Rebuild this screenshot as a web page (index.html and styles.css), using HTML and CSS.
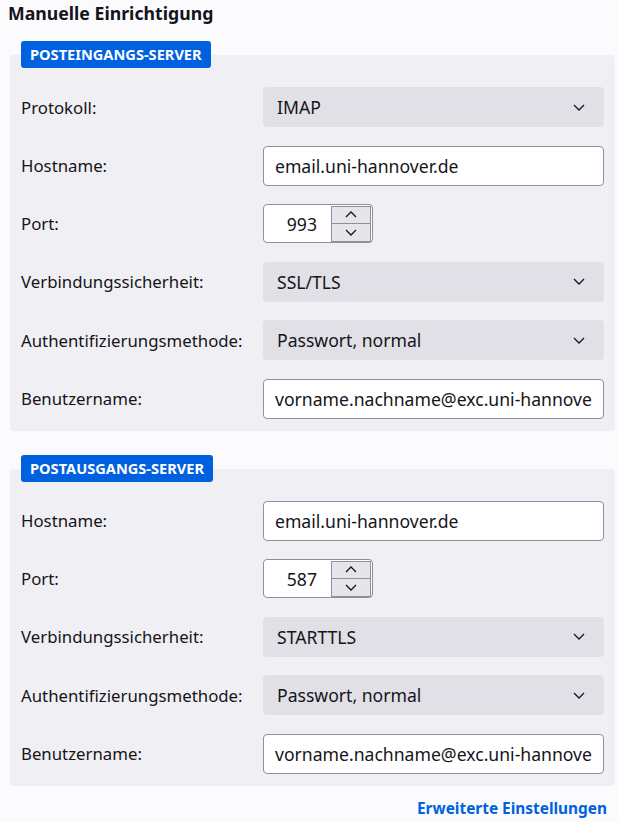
FILE: index.html
```html
<!DOCTYPE html>
<html lang="de">
<head>
    <meta charset="UTF-8">
    <title>Manuelle Einrichtigung</title>
    <link rel="stylesheet" href="styles.css">
</head>
<body>
    <div class="page">
        <h1>Manuelle Einrichtigung</h1>

        <section class="server">
            <div class="badge">Posteingangs-Server</div>
            <div class="panel">
                <div class="row">
                    <label>Protokoll:</label>
                    <div class="select"><span>IMAP</span><svg class="chev" viewBox="0 0 12 7"><path d="M1 1l5 5 5-5"/></svg></div>
                </div>
                <div class="row">
                    <label>Hostname:</label>
                    <div class="input"><span>email.uni-hannover.de</span></div>
                </div>
                <div class="row">
                    <label>Port:</label>
                    <div class="port">
                        <span class="port-value">993</span>
                        <div class="spin">
                            <div class="spin-btn"><svg viewBox="0 0 12 7"><path d="M1 6l5-5 5 5"/></svg></div>
                            <div class="spin-btn"><svg viewBox="0 0 12 7"><path d="M1 1l5 5 5-5"/></svg></div>
                        </div>
                    </div>
                </div>
                <div class="row">
                    <label>Verbindungssicherheit:</label>
                    <div class="select"><span>SSL/TLS</span><svg class="chev" viewBox="0 0 12 7"><path d="M1 1l5 5 5-5"/></svg></div>
                </div>
                <div class="row">
                    <label>Authentifizierungsmethode:</label>
                    <div class="select"><span>Passwort, normal</span><svg class="chev" viewBox="0 0 12 7"><path d="M1 1l5 5 5-5"/></svg></div>
                </div>
                <div class="row">
                    <label>Benutzername:</label>
                    <div class="input"><span>vorname.nachname@exc.uni-hannover.de</span></div>
                </div>
            </div>
        </section>

        <section class="server">
            <div class="badge">Postausgangs-Server</div>
            <div class="panel">
                <div class="row">
                    <label>Hostname:</label>
                    <div class="input"><span>email.uni-hannover.de</span></div>
                </div>
                <div class="row">
                    <label>Port:</label>
                    <div class="port">
                        <span class="port-value">587</span>
                        <div class="spin">
                            <div class="spin-btn"><svg viewBox="0 0 12 7"><path d="M1 6l5-5 5 5"/></svg></div>
                            <div class="spin-btn"><svg viewBox="0 0 12 7"><path d="M1 1l5 5 5-5"/></svg></div>
                        </div>
                    </div>
                </div>
                <div class="row">
                    <label>Verbindungssicherheit:</label>
                    <div class="select"><span>STARTTLS</span><svg class="chev" viewBox="0 0 12 7"><path d="M1 1l5 5 5-5"/></svg></div>
                </div>
                <div class="row">
                    <label>Authentifizierungsmethode:</label>
                    <div class="select"><span>Passwort, normal</span><svg class="chev" viewBox="0 0 12 7"><path d="M1 1l5 5 5-5"/></svg></div>
                </div>
                <div class="row">
                    <label>Benutzername:</label>
                    <div class="input"><span>vorname.nachname@exc.uni-hannover.de</span></div>
                </div>
            </div>
        </section>

        <div class="footer">
            <a href="#">Erweiterte Einstellungen</a>
        </div>
    </div>
</body>
</html>
```

FILE: styles.css
```css
body {
    margin: 0;
    background: #fbfbfe;
    font-family: "Noto Sans", sans-serif;
    color: #15141a;
}
.page {
    width: 619px;
}
h1 {
    margin: 0;
    padding: 0 8px;
    font-size: 17.7px;
    font-weight: bold;
    line-height: 26px;
}
.server {
    margin: 15px 4px 0 10px;
}
.server + .server {
    margin-top: 24px;
}
.badge {
    position: relative;
    z-index: 1;
    width: fit-content;
    margin-left: 11px;
    margin-bottom: -13px;
    padding: 0 9px;
    height: 27px;
    line-height: 27px;
    background: #0061e0;
    color: #fff;
    border-radius: 3px;
    font-size: 14.6px;
    font-weight: bold;
    text-transform: uppercase;
}
.panel {
    background: #f0f0f4;
    border-radius: 4px;
    padding: 32px 11px 12px;
    display: flex;
    flex-direction: column;
    gap: 18.5px;
}
.row {
    display: grid;
    grid-template-columns: 242px minmax(0, 1fr);
    align-items: center;
    font-size: 16.8px;
}
.select, .input, .port {
    font-size: 17.6px;
}
.select {
    height: 40px;
    background: #e0e0e6;
    border-radius: 4px;
    display: flex;
    align-items: center;
    justify-content: space-between;
    padding: 0 19px 0 14px;
}
.chev {
    width: 12px;
    height: 7px;
    fill: none;
    stroke: #15141a;
    stroke-width: 1.3;
}
.input {
    min-width: 0;
    height: 38px;
    line-height: 38px;
    background: #fff;
    border: 1px solid #8f8f9d;
    border-radius: 4px;
    padding: 0 11px;
}
.input span {
    display: block;
    white-space: nowrap;
    overflow: hidden;
}
.port {
    width: 108px;
    height: 37px;
    background: #fff;
    border: 1px solid #8f8f9d;
    border-radius: 4px;
    display: flex;
    align-items: center;
    justify-content: flex-end;
}
.port-value {
    padding-right: 14px;
}
.spin {
    width: 38px;
    height: 34px;
    border: 1px solid #8f8f9d;
    margin-right: 1px;
    display: flex;
    flex-direction: column;
}
.spin-btn {
    flex: 1;
    background: #e5e5ea;
    display: flex;
    align-items: center;
    justify-content: center;
}
.spin-btn + .spin-btn {
    border-top: 1px solid #8f8f9d;
}
.spin-btn svg {
    width: 12px;
    height: 7px;
    fill: none;
    stroke: #15141a;
    stroke-width: 1.3;
}
.footer {
    text-align: right;
    padding: 11px 12px 0 0;
}
.footer a {
    color: #0061e0;
    font-weight: bold;
    font-size: 15.4px;
    text-decoration: none;
}
```
